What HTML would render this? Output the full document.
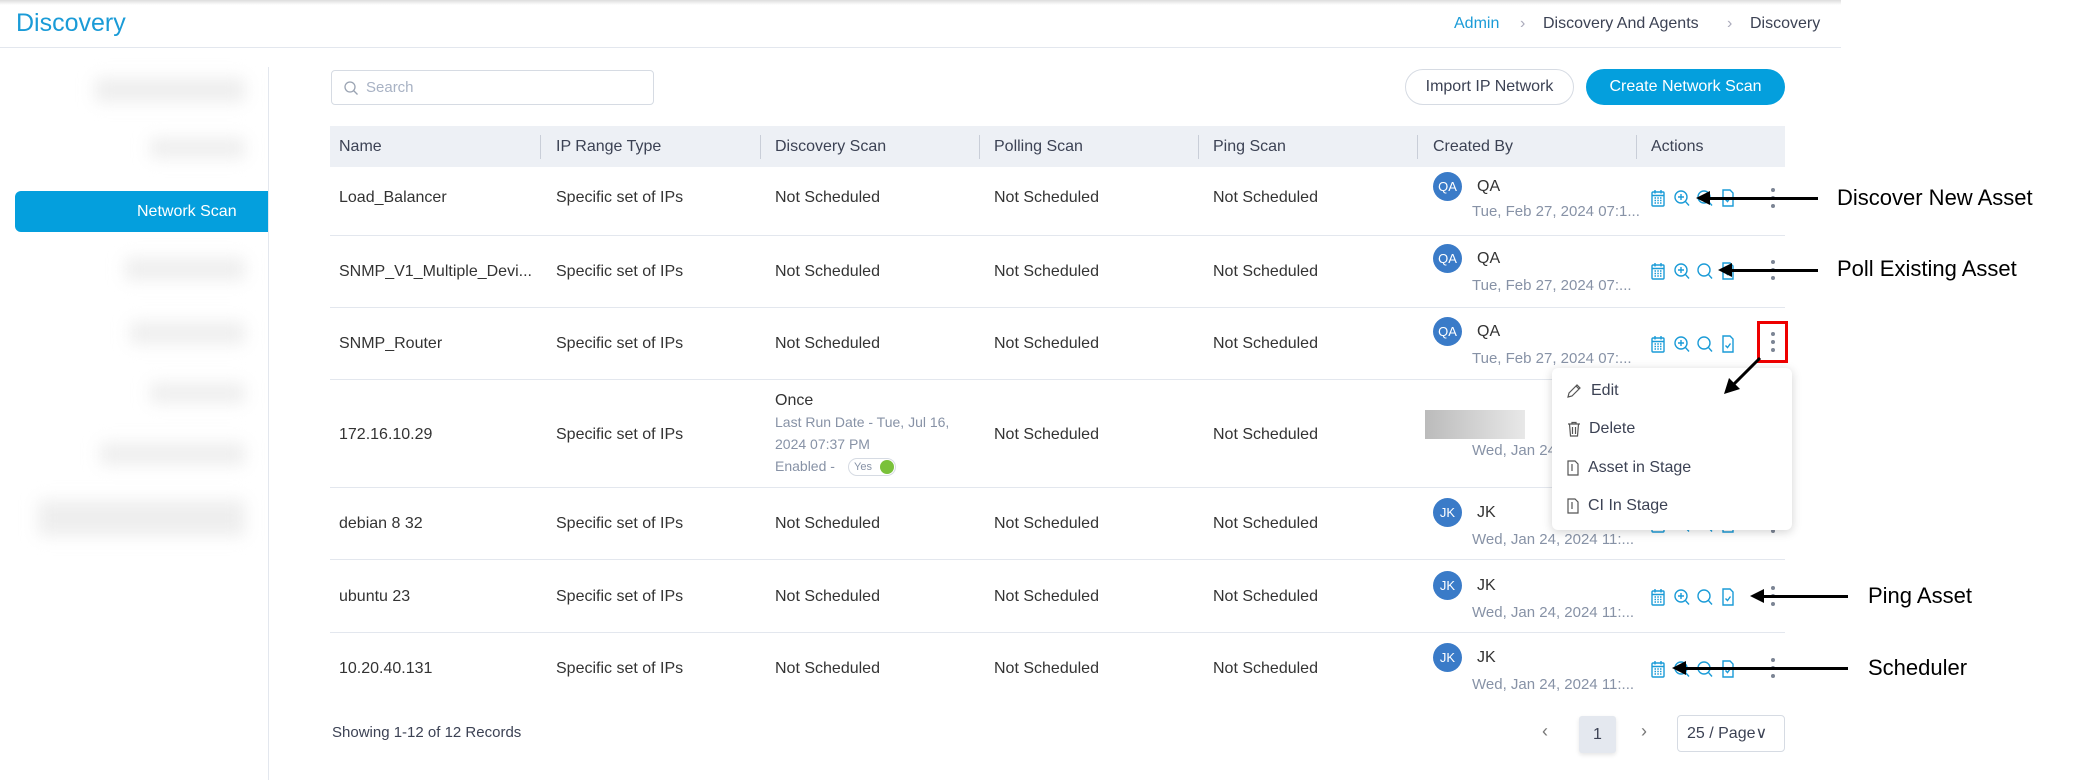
<!DOCTYPE html>
<html><head><meta charset="utf-8"><style>
*{margin:0;padding:0;box-sizing:border-box}
body{width:2092px;height:780px;background:#fff;position:relative;overflow:hidden;font-family:"Liberation Sans",sans-serif;color:#333;font-size:16px}
.a{position:absolute;white-space:nowrap}
.sh{position:absolute;left:0;top:0;width:1841px;height:5px;background:linear-gradient(#ddd,#fff)}
.hd{color:#3c4254;font-size:16px}
.g{color:#8792a6}
.d{font-size:15px}
.sep{position:absolute;width:1px;height:24px;top:135px;background:#c9ced8}
.rl{position:absolute;left:330px;width:1455px;height:1px;background:#e3e7ee}
.av{position:absolute;width:29px;height:29px;border-radius:50%;background:#3a7bc8;color:#fff;font-size:13px;text-align:center;line-height:29px}
.blur{position:absolute;background:#eeeeee;filter:blur(8px)}
.ic{position:absolute}
.keb{position:absolute;width:4px}
.keb i{display:block;width:4px;height:4px;border-radius:50%;background:#7c8595;margin-bottom:4px}
.arr{position:absolute;height:3px;background:#000}
.ah{position:absolute;width:0;height:0;border-top:7px solid transparent;border-bottom:7px solid transparent;border-right:14px solid #000}
.ann{position:absolute;font-size:22px;color:#000;white-space:nowrap}
</style></head><body>
<div class="sh"></div>
<div class="a" style="left:16px;top:9px;font-size:25px;color:#1a9bd7">Discovery</div>
<div class="a" style="left:1454px;top:15px;font-size:16px;color:#1a9bd7">Admin</div>
<div class="a" style="left:1520px;top:15px;color:#aab">›</div>
<div class="a" style="left:1543px;top:15px;font-size:16px;color:#3c4254">Discovery And Agents</div>
<div class="a" style="left:1727px;top:15px;color:#aab">›</div>
<div class="a" style="left:1750px;top:15px;font-size:16px;color:#3c4254">Discovery</div>
<div style="position:absolute;left:0;top:47px;width:1841px;height:1px;background:#e3e7ee"></div>

<div style="position:absolute;left:268px;top:67px;width:1px;height:713px;background:#e3e7ee"></div>
<div class="blur" style="left:95px;top:78px;width:150px;height:24px"></div>
<div class="blur" style="left:150px;top:138px;width:95px;height:20px"></div>
<div style="position:absolute;left:15px;top:191px;width:253px;height:41px;background:#049fdd;border-radius:6px 0 0 6px"></div>
<div class="a" style="left:137px;top:203px;color:#fff;font-size:16px">Network Scan</div>
<div class="blur" style="left:125px;top:258px;width:120px;height:22px"></div>
<div class="blur" style="left:130px;top:322px;width:115px;height:22px"></div>
<div class="blur" style="left:150px;top:383px;width:95px;height:20px"></div>
<div class="blur" style="left:100px;top:443px;width:145px;height:22px"></div>
<div class="blur" style="left:38px;top:500px;width:207px;height:36px"></div>

<div style="position:absolute;left:331px;top:70px;width:323px;height:35px;border:1px solid #d6dbe3;border-radius:4px"></div>
<svg class="ic" style="left:343px;top:80px" width="16" height="16" viewBox="0 0 16 16"><circle cx="7" cy="7" r="5" fill="none" stroke="#9aa3b2" stroke-width="1.3"/><path d="M10.5 10.5l4 4" stroke="#9aa3b2" stroke-width="1.3"/></svg>
<div class="a" style="left:366px;top:79px;color:#a8b2c4;font-size:15px">Search</div>

<div style="position:absolute;left:1405px;top:69px;width:169px;height:36px;border:1px solid #d6dbe3;border-radius:18px;text-align:center;line-height:34px;font-size:16px;color:#3c4254">Import IP Network</div>
<div style="position:absolute;left:1586px;top:69px;width:199px;height:36px;background:#049fdd;border-radius:18px;text-align:center;line-height:36px;font-size:16px;color:#fff">Create Network Scan</div>

<div style="position:absolute;left:330px;top:126px;width:1455px;height:41px;background:#edf0f5"></div>
<div class="a hd" style="left:339px;top:138px">Name</div>
<div class="sep" style="left:540px"></div><div class="a hd" style="left:556px;top:138px">IP Range Type</div>
<div class="sep" style="left:760px"></div><div class="a hd" style="left:775px;top:138px">Discovery Scan</div>
<div class="sep" style="left:979px"></div><div class="a hd" style="left:994px;top:138px">Polling Scan</div>
<div class="sep" style="left:1198px"></div><div class="a hd" style="left:1213px;top:138px">Ping Scan</div>
<div class="sep" style="left:1417px"></div><div class="a hd" style="left:1433px;top:138px">Created By</div>
<div class="sep" style="left:1636px"></div><div class="a hd" style="left:1651px;top:138px">Actions</div>

<div class="rl" style="top:235px"></div><div class="rl" style="top:307px"></div><div class="rl" style="top:379px"></div>
<div class="rl" style="top:487px"></div><div class="rl" style="top:559px"></div><div class="rl" style="top:632px"></div>

<div class="a" style="left:339px;top:189px">Load_Balancer</div><div class="a" style="left:556px;top:189px">Specific set of IPs</div><div class="a" style="left:775px;top:189px">Not Scheduled</div><div class="a" style="left:994px;top:189px">Not Scheduled</div><div class="a" style="left:1213px;top:189px">Not Scheduled</div>
<div class="a" style="left:339px;top:263px">SNMP_V1_Multiple_Devi...</div><div class="a" style="left:556px;top:263px">Specific set of IPs</div><div class="a" style="left:775px;top:263px">Not Scheduled</div><div class="a" style="left:994px;top:263px">Not Scheduled</div><div class="a" style="left:1213px;top:263px">Not Scheduled</div>
<div class="a" style="left:339px;top:335px">SNMP_Router</div><div class="a" style="left:556px;top:335px">Specific set of IPs</div><div class="a" style="left:775px;top:335px">Not Scheduled</div><div class="a" style="left:994px;top:335px">Not Scheduled</div><div class="a" style="left:1213px;top:335px">Not Scheduled</div>
<div class="a" style="left:339px;top:426px">172.16.10.29</div><div class="a" style="left:556px;top:426px">Specific set of IPs</div><div class="a" style="left:994px;top:426px">Not Scheduled</div><div class="a" style="left:1213px;top:426px">Not Scheduled</div>
<div class="a" style="left:775px;top:392px">Once</div>
<div class="a g" style="left:775px;top:414px;font-size:14px">Last Run Date - Tue, Jul 16,</div>
<div class="a g" style="left:775px;top:436px;font-size:14px">2024 07:37 PM</div>
<div class="a g" style="left:775px;top:458px;font-size:14px">Enabled -</div>
<div style="position:absolute;left:848px;top:458px;width:48px;height:18px;border:1px solid #d6dbe3;border-radius:9px;font-size:11px;color:#8792a6;padding-left:5px;line-height:16px">Yes</div>
<div style="position:absolute;left:880px;top:460px;width:14px;height:14px;border-radius:50%;background:#7ac13a"></div>
<div class="a" style="left:339px;top:515px">debian 8 32</div><div class="a" style="left:556px;top:515px">Specific set of IPs</div><div class="a" style="left:775px;top:515px">Not Scheduled</div><div class="a" style="left:994px;top:515px">Not Scheduled</div><div class="a" style="left:1213px;top:515px">Not Scheduled</div>
<div class="a" style="left:339px;top:588px">ubuntu 23</div><div class="a" style="left:556px;top:588px">Specific set of IPs</div><div class="a" style="left:775px;top:588px">Not Scheduled</div><div class="a" style="left:994px;top:588px">Not Scheduled</div><div class="a" style="left:1213px;top:588px">Not Scheduled</div>
<div class="a" style="left:339px;top:660px">10.20.40.131</div><div class="a" style="left:556px;top:660px">Specific set of IPs</div><div class="a" style="left:775px;top:660px">Not Scheduled</div><div class="a" style="left:994px;top:660px">Not Scheduled</div><div class="a" style="left:1213px;top:660px">Not Scheduled</div>

<div class="av" style="left:1433px;top:172px">QA</div><div class="a" style="left:1477px;top:178px">QA</div><div class="a g d" style="left:1472px;top:203px">Tue, Feb 27, 2024 07:1...</div>
<div class="av" style="left:1433px;top:244px">QA</div><div class="a" style="left:1477px;top:250px">QA</div><div class="a g d" style="left:1472px;top:277px">Tue, Feb 27, 2024 07:...</div>
<div class="av" style="left:1433px;top:317px">QA</div><div class="a" style="left:1477px;top:323px">QA</div><div class="a g d" style="left:1472px;top:350px">Tue, Feb 27, 2024 07:...</div>
<div style="position:absolute;left:1425px;top:410px;width:100px;height:29px;background:linear-gradient(90deg,#bbb,#e8e8e8)"></div>
<div class="a g d" style="left:1472px;top:442px">Wed, Jan 24</div>
<div class="av" style="left:1433px;top:498px">JK</div><div class="a" style="left:1477px;top:504px">JK</div><div class="a g d" style="left:1472px;top:531px">Wed, Jan 24, 2024 11:...</div>
<div class="av" style="left:1433px;top:571px">JK</div><div class="a" style="left:1477px;top:577px">JK</div><div class="a g d" style="left:1472px;top:604px">Wed, Jan 24, 2024 11:...</div>
<div class="av" style="left:1433px;top:643px">JK</div><div class="a" style="left:1477px;top:649px">JK</div><div class="a g d" style="left:1472px;top:676px">Wed, Jan 24, 2024 11:...</div>

<svg width="0" height="0" style="position:absolute"><defs>
<g id="acts" fill="none" stroke="#1a9bd7" stroke-width="1.4">
<rect x="1" y="3" width="12" height="14" rx="1"/><path d="M1 6.5h12M4 1v3.5M10 1v3.5"/><path d="M3.5 9h1.5M6.3 9h1.5M9 9h1.5M3.5 11.5h1.5M6.3 11.5h1.5M9 11.5h1.5M3.5 14h1.5M6.3 14h1.5M9 14h1.5"/>
<circle cx="30" cy="8" r="6"/><path d="M34.3 12.3l3.7 4.2M27 8h6M30 5v6"/>
<circle cx="53" cy="8" r="6"/><path d="M57.3 12.3l3.7 4.2"/>
<path d="M72 1h7l3 3v13H72z"/><path d="M74.5 10.5l2 2 3-4"/>
</g></defs></svg>
<svg class="ic" style="left:1651px;top:189px" width="90" height="20"><use href="#acts"/></svg>
<svg class="ic" style="left:1651px;top:262px" width="90" height="20"><use href="#acts"/></svg>
<svg class="ic" style="left:1651px;top:335px" width="90" height="20"><use href="#acts"/></svg>
<svg class="ic" style="left:1651px;top:515px" width="90" height="20"><use href="#acts"/></svg>
<svg class="ic" style="left:1651px;top:588px" width="90" height="20"><use href="#acts"/></svg>
<svg class="ic" style="left:1651px;top:660px" width="90" height="20"><use href="#acts"/></svg>
<div class="keb" style="left:1771px;top:188px"><i></i><i></i><i></i></div>
<div class="keb" style="left:1771px;top:260px"><i></i><i></i><i></i></div>
<div class="keb" style="left:1771px;top:332px"><i></i><i></i><i></i></div>
<div class="keb" style="left:1771px;top:513px"><i></i><i></i><i></i></div>
<div class="keb" style="left:1771px;top:586px"><i></i><i></i><i></i></div>
<div class="keb" style="left:1771px;top:658px"><i></i><i></i><i></i></div>
<div style="position:absolute;left:1757px;top:321px;width:31px;height:42px;border:3px solid #e00"></div>

<div style="position:absolute;left:1552px;top:368px;width:240px;height:162px;background:#fff;border-radius:6px;box-shadow:0 2px 10px rgba(0,0,0,.18)"></div>
<svg class="ic" style="left:1566px;top:383px" width="16" height="16" fill="none" stroke="#555" stroke-width="1.2"><path d="M2 14l1-4 8-8 3 3-8 8z M10 3l3 3"/></svg>
<div class="a" style="left:1591px;top:382px;color:#3c4254">Edit</div>
<svg class="ic" style="left:1566px;top:421px" width="16" height="16" fill="none" stroke="#555" stroke-width="1.2"><path d="M2 3h12M6 3V1.5h4V3M3.5 3l1 12h7l1-12M6.5 6v7M9.5 6v7"/></svg>
<div class="a" style="left:1589px;top:420px;color:#3c4254">Delete</div>
<svg class="ic" style="left:1566px;top:460px" width="14" height="16" fill="none" stroke="#555" stroke-width="1.2"><path d="M2 1h7l3 3v11H2z M6 4v7"/></svg>
<div class="a" style="left:1588px;top:459px;color:#3c4254">Asset in Stage</div>
<svg class="ic" style="left:1566px;top:498px" width="14" height="16" fill="none" stroke="#555" stroke-width="1.2"><path d="M2 1h7l3 3v11H2z M6 4v7"/></svg>
<div class="a" style="left:1588px;top:497px;color:#3c4254">CI In Stage</div>

<div class="a" style="left:332px;top:724px;font-size:15px;color:#3c4254">Showing 1-12 of 12 Records</div>
<div class="a" style="left:1542px;top:721px;color:#777;font-size:18px">‹</div>
<div style="position:absolute;left:1579px;top:716px;width:37px;height:37px;background:#e4e8ef;border-radius:3px;text-align:center;line-height:37px;color:#3c4254;box-shadow:0 2px 4px rgba(0,0,0,.1)">1</div>
<div class="a" style="left:1641px;top:721px;color:#777;font-size:18px">›</div>
<div style="position:absolute;left:1677px;top:715px;width:108px;height:37px;border:1px solid #d6dbe3;border-radius:4px;line-height:35px;padding-left:9px;color:#3c4254">25 / Page∨</div>

<div class="arr" style="left:1708px;top:197px;width:110px"></div><div class="ah" style="left:1696px;top:191px"></div>
<div class="ann" style="left:1837px;top:185px">Discover New Asset</div>
<div class="arr" style="left:1730px;top:269px;width:88px"></div><div class="ah" style="left:1718px;top:263px"></div>
<div class="ann" style="left:1837px;top:256px">Poll Existing Asset</div>
<div class="arr" style="left:1762px;top:595px;width:86px"></div><div class="ah" style="left:1750px;top:589px"></div>
<div class="ann" style="left:1868px;top:583px">Ping Asset</div>
<div class="arr" style="left:1684px;top:667px;width:164px"></div><div class="ah" style="left:1672px;top:661px"></div>
<div class="ann" style="left:1868px;top:655px">Scheduler</div>
<svg class="ic" style="left:1720px;top:355px" width="45" height="42"><path d="M40 3L12 31" stroke="#000" stroke-width="3"/><path d="M4 39l5-16 11 11z" fill="#000"/></svg>
</body></html>
